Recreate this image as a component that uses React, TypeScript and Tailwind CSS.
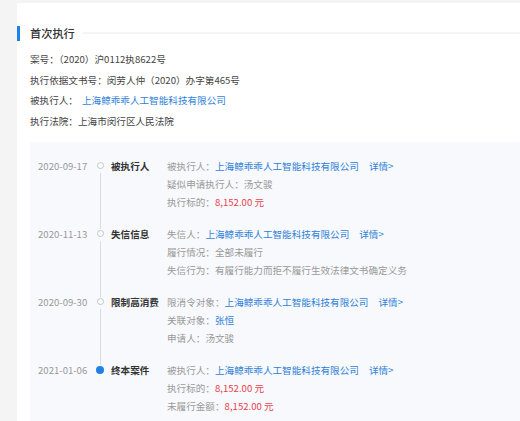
const FONT = { fontFamily: '"Noto Sans CJK SC", "Microsoft YaHei", sans-serif' };

type Part = { text: string; tone?: "gray" | "blue" | "red" };
type Line = { label: string; parts: Part[]; more?: boolean };
type Step = { date: string; title: string; active?: boolean; lines: Line[] };

const company = "上海鲸乖乖人工智能科技有限公司";

const steps: Step[] = [
  {
    date: "2020-09-17",
    title: "被执行人",
    lines: [
      { label: "被执行人：", parts: [{ text: company, tone: "blue" }], more: true },
      { label: "疑似申请执行人：", parts: [{ text: "汤文骏" }] },
      { label: "执行标的：", parts: [{ text: "8,152.00 元", tone: "red" }] },
    ],
  },
  {
    date: "2020-11-13",
    title: "失信信息",
    lines: [
      { label: "失信人：", parts: [{ text: company, tone: "blue" }], more: true },
      { label: "履行情况：", parts: [{ text: "全部未履行" }] },
      { label: "失信行为：", parts: [{ text: "有履行能力而拒不履行生效法律文书确定义务" }] },
    ],
  },
  {
    date: "2020-09-30",
    title: "限制高消费",
    lines: [
      { label: "限消令对象：", parts: [{ text: company, tone: "blue" }], more: true },
      { label: "关联对象：", parts: [{ text: "张恒", tone: "blue" }] },
      { label: "申请人：", parts: [{ text: "汤文骏" }] },
    ],
  },
  {
    date: "2021-01-06",
    title: "终本案件",
    active: true,
    lines: [
      { label: "被执行人：", parts: [{ text: company, tone: "blue" }], more: true },
      { label: "执行标的：", parts: [{ text: "8,152.00 元", tone: "red" }] },
      { label: "未履行金额：", parts: [{ text: "8,152.00 元", tone: "red" }] },
    ],
  },
];

const toneClass = {
  gray: "text-[#9a9a9a]",
  blue: "text-[#2f7fd8]",
  red: "text-[#e8434f]",
};

function TimelineRow({ step, last }: { step: Step; last: boolean }) {
  return (
    <div className="flex">
      <div className="w-[58px] shrink-0 text-[#999] leading-[18px]">{step.date}</div>
      <div className="flex w-[8px] shrink-0 flex-col items-center">
        {step.active ? (
          <span className="mt-[5px] h-[8px] w-[8px] rounded-full bg-[#1f80e6]" />
        ) : (
          <span className="mt-[5.5px] h-[7px] w-[7px] rounded-full border border-[#c4c4c4] bg-white" />
        )}
        {!last && <span className="mb-[-18.5px] mt-[4px] w-px flex-1 bg-[#dcdcdc]" />}
      </div>
      <div className="ml-[7px] w-[56px] shrink-0 font-bold text-[#333] leading-[18px]">
        {step.title}
      </div>
      <div className="flex flex-col">
        {step.lines.map((l, i) => (
          <div key={i} className="whitespace-nowrap leading-[18px] text-[#9a9a9a]">
            {l.label}
            {l.parts.map((p, j) => (
              <span key={j} className={toneClass[p.tone ?? "gray"]}>
                {p.text}
              </span>
            ))}
            {l.more && <span className="ml-[10px] text-[#2f7fd8]">详情&gt;</span>}
          </div>
        ))}
      </div>
    </div>
  );
}

export default function App() {
  return (
    <div className="h-[421px] overflow-hidden bg-[#f4f4f5] pl-[17px] pt-[3px]" style={FONT}>
      <div className="h-full bg-white pt-[22px]">
        <div className="flex h-[16px] items-center">
          <span className="h-[15px] w-[3px] bg-[#1f80e6]" />
          <h2 className="ml-[10px] text-[11.2px] font-medium text-[#333]">首次执行</h2>
          <span className="ml-[8px] h-[2px] flex-1 bg-[#f4f4f4]" />
        </div>

        <div className="mt-[8px] pl-[13px] text-[9.6px] leading-[20.6px] text-[#444]">
          <div>案号：（2020）沪0112执8622号</div>
          <div>执行依据文书号：闵劳人仲（2020）办字第465号</div>
          <div>
            被执行人：<span className="ml-[4px] text-[#2f7fd8]">{company}</span>
          </div>
          <div>执行法院：上海市闵行区人民法院</div>
        </div>

        <div className="ml-[13px] mt-[10.5px] h-full bg-[#f7f9fc] pl-[8px] pt-[15px] text-[9.6px]">
          <div className="flex flex-col gap-[14px]">
            {steps.map((s, i) => (
              <TimelineRow key={i} step={s} last={i === steps.length - 1} />
            ))}
          </div>
        </div>
      </div>
    </div>
  );
}
